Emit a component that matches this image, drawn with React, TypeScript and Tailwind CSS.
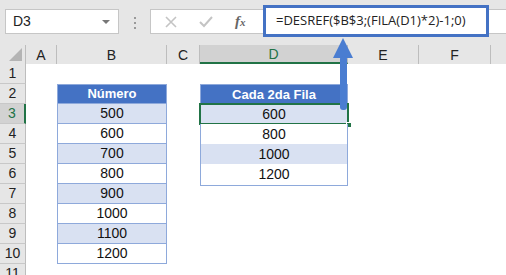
import React from "react"

const cols = ["A", "B", "C", "D", "E", "F", ""]
const colWidths = [31, 110, 33, 148, 71, 72, 41]
const numeros = [500, 600, 700, 800, 900, 1000, 1100, 1200]
const cadaFila = [600, 800, 1000, 1200]

function TopBar() {
  return (
    <div className="flex h-[45px] items-start bg-[#e6e6e6] pt-[9px]">
      <div className="ml-[5px] flex h-[25px] w-[114px] items-center justify-between border border-[#c6c6c6] bg-white pl-[7px] pr-[8px] text-[14px] text-[#222]">
        <span>D3</span>
        <span className="h-0 w-0 border-x-[4px] border-t-[4px] border-x-transparent border-t-[#777]" />
      </div>
      <div className="flex w-[31px] flex-col items-center gap-[3px] pt-[8px]">
        <span className="h-[2px] w-[2px] bg-[#999]" />
        <span className="h-[2px] w-[2px] bg-[#999]" />
        <span className="h-[2px] w-[2px] bg-[#999]" />
      </div>
      <div className="relative flex h-[25px] flex-1 items-center border-y border-l border-[#c6c6c6] bg-white">
        <svg width="12" height="12" viewBox="0 0 12 12" className="ml-[14px]">
          <path d="M1 1 L11 11 M11 1 L1 11" stroke="#c4c4c4" strokeWidth="1.6" />
        </svg>
        <svg width="14" height="12" viewBox="0 0 14 12" className="ml-[22px]">
          <path d="M1 6 L5 10 L13 1" stroke="#c4c4c4" strokeWidth="2" fill="none" />
        </svg>
        <span className="ml-[22px] font-['Liberation_Serif',serif] text-[15px] font-bold italic text-[#666]">
          f<span className="text-[11px]">x</span>
        </span>
        <div className="absolute left-[112px] top-[-5px] flex h-[32px] w-[226px] items-center border-[3px] border-[#4472c4] bg-white pl-[10px] font-['Open_Sans',sans-serif] text-[13px] text-[#222]">
          =DESREF($B$3;(FILA(D1)*2)-1;0)
        </div>
      </div>
    </div>
  )
}

function HeaderRow() {
  return (
    <div className="flex h-[19px] bg-[#e6e6e6]">
      <div className="relative w-[26px] shrink-0 border-r border-[#bdbdbd]">
        <span className="absolute bottom-[3px] right-[3px] h-0 w-0 border-b-[13px] border-l-[13px] border-b-[#b4b4b4] border-l-transparent" />
      </div>
      {cols.map((c, i) => (
        <div
          key={i}
          style={{ width: colWidths[i] }}
          className={
            c === "D"
              ? "flex shrink-0 items-center justify-center border-r border-b-2 border-[#bdbdbd] border-b-[#217346] bg-[#d2d2d2] pt-[2px] text-[14px] text-[#217346]"
              : "flex shrink-0 items-center justify-center border-r border-[#bdbdbd] pt-[1px] text-[14px] text-[#222]"
          }
        >
          {c}
        </div>
      ))}
    </div>
  )
}

function TableCell({ text, header, fill, w }: { text?: string | number; header?: boolean; fill?: boolean; w: number }) {
  if (text === undefined) return <div style={{ width: w }} className="shrink-0" />
  let cls = "flex shrink-0 items-center justify-center border-x border-b border-[#8ea9db] "
  if (header) cls += "border-t bg-[#4472c4] text-[13px] font-bold text-white"
  else if (fill) cls += "bg-[#d9e1f2] text-[14px] text-[#111]"
  else cls += "bg-white text-[14px] text-[#111]"
  return (
    <div style={{ width: w }} className={cls}>
      {text}
    </div>
  )
}

function Row({ n }: { n: number }) {
  const selected = n === 3
  let b: string | number | undefined
  let d: string | number | undefined
  if (n === 2) {
    b = "Número"
    d = "Cada 2da Fila"
  } else if (n >= 3 && n <= 10) {
    b = numeros[n - 3]
    if (n <= 6) d = cadaFila[n - 3]
  }
  const fill = n % 2 === 1
  return (
    <div className="flex h-[20px]">
      <div
        className={
          selected
            ? "flex w-[26px] shrink-0 items-center justify-center border-b border-r-2 border-[#c8c8c8] border-r-[#217346] bg-[#d2d2d2] text-[14px] text-[#217346]"
            : "flex w-[26px] shrink-0 items-center justify-center border-b border-r border-[#c8c8c8] border-r-[#bdbdbd] bg-[#e6e6e6] text-[14px] text-[#222]"
        }
      >
        {n}
      </div>
      <div style={{ width: colWidths[0] }} className="shrink-0" />
      <TableCell w={colWidths[1]} text={b} header={n === 2} fill={fill} />
      <div style={{ width: colWidths[2] }} className="shrink-0" />
      <div className="relative">
        <TableCell w={colWidths[3]} text={d} header={n === 2} fill={fill} />
        {selected && (
          <>
            <div className="absolute inset-[-1px] border-2 border-[#217346]" />
            <div className="absolute bottom-[-4px] right-[-4px] h-[6px] w-[6px] border border-white bg-[#217346]" />
          </>
        )}
      </div>
    </div>
  )
}

export default function App() {
  return (
    <div className="relative h-[275px] w-[506px] overflow-hidden bg-white font-['Liberation_Sans',Arial,sans-serif]">
      <TopBar />
      <HeaderRow />
      {Array.from({ length: 11 }, (_, i) => (
        <Row key={i} n={i + 1} />
      ))}
      <svg className="absolute left-[330px] top-[36px]" width="26" height="78" viewBox="0 0 26 78">
        <path d="M13 2 L23 22 L3 22 Z" fill="#4a7dd1" />
        <rect x="10" y="20" width="7" height="54" rx="3" fill="#4a7dd1" />
      </svg>
    </div>
  )
}
